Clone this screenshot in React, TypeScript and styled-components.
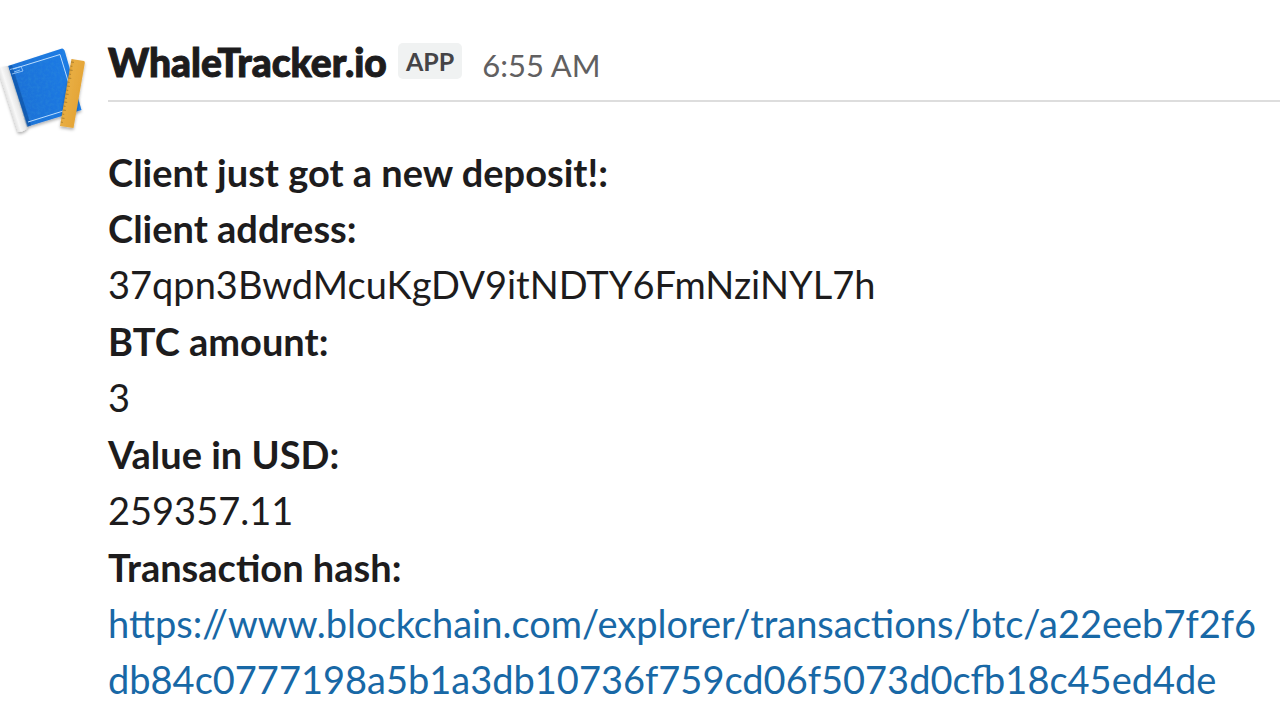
import React from "react";
import styled, { createGlobalStyle } from "styled-components";

const GlobalStyle = createGlobalStyle`
  * { box-sizing: border-box; }
  body {
    margin: 0;
    background: #ffffff;
    color: #1d1c1d;
    font-family: Lato, "Liberation Sans", sans-serif;
    overflow-x: hidden;
    -webkit-font-smoothing: antialiased;
  }
`;

const Message = styled.article`
  display: flex;
  align-items: flex-start;
  padding-top: 35px;
`;

const AvatarColumn = styled.div`
  flex: 0 0 108px;

  svg {
    display: block;
  }
`;

const Content = styled.div`
  flex: 1;
  min-width: 0;
`;

const Header = styled.header`
  display: flex;
  align-items: baseline;
  height: 67px;
  padding-top: 3px;
  border-bottom: 2px solid #dddddd;
`;

const Sender = styled.h1`
  margin: 0;
  font-size: 39px;
  font-weight: 900;
  line-height: 48px;
  -webkit-text-stroke: 1px currentColor;
`;

const Badge = styled.span`
  align-self: flex-start;
  margin: 5px 0 0 11px;
  padding: 0 8px;
  border-radius: 5px;
  background: #f0f2f2;
  color: #454447;
  font-size: 25px;
  font-weight: 700;
  line-height: 36px;
`;

const Time = styled.time`
  margin-left: 20px;
  color: #616061;
  font-size: 31px;
  line-height: 48px;
`;

const Body = styled.div`
  padding: 42px 8px 0 0;
  font-size: 38px;
  line-height: 56px;
`;

const Title = styled.h2`
  margin: 0;
  font-size: inherit;
  font-weight: 700;
`;

const Details = styled.dl`
  display: flex;
  flex-direction: column;
  gap: 1px;
  margin: 0;
`;

const Label = styled.dt`
  font-weight: 700;
`;

const Value = styled.dd`
  margin: 0;
  word-break: break-all;
`;

const Link = styled.a`
  color: #1868a6;
  text-decoration: none;

  &:hover {
    text-decoration: underline;
  }
`;

const ticks = Array.from({ length: 16 }, (_, i) => i);

function BlueprintIcon() {
  return (
    <svg width="90" height="104" viewBox="0 0 90 104" role="img" aria-label="WhaleTracker.io">
      <defs>
        <linearGradient id="roll" x1="8" y1="66" x2="19" y2="62.5" gradientUnits="userSpaceOnUse">
          <stop offset="0" stopColor="#e4e4e4" />
          <stop offset="0.3" stopColor="#f8f8f8" />
          <stop offset="0.75" stopColor="#e6e6e6" />
          <stop offset="1" stopColor="#bdbdbd" />
        </linearGradient>
        <linearGradient id="paper" x1="15" y1="60" x2="75" y2="40" gradientUnits="userSpaceOnUse">
          <stop offset="0" stopColor="#155fb8" />
          <stop offset="0.12" stopColor="#1b72d8" />
          <stop offset="1" stopColor="#1b7be6" />
        </linearGradient>
        <linearGradient id="wood" x1="65" y1="50" x2="80" y2="53" gradientUnits="userSpaceOnUse">
          <stop offset="0" stopColor="#d9982c" />
          <stop offset="0.3" stopColor="#e8ad42" />
          <stop offset="1" stopColor="#e5a638" />
        </linearGradient>
        <filter id="grain" x="0" y="0" width="1" height="1">
          <feTurbulence type="fractalNoise" baseFrequency="0.35" numOctaves="2" seed="4" />
          <feColorMatrix values="0 0 0 0 0.03  0 0 0 0 0.28  0 0 0 0 0.68  0 0 0 1.6 -0.6" />
          <feComposite in2="SourceGraphic" operator="in" />
        </filter>
        <filter id="shadow" x="-0.2" y="-0.2" width="1.4" height="1.4">
          <feDropShadow dx="0" dy="2" stdDeviation="1.5" floodColor="#000000" floodOpacity="0.3" />
        </filter>
      </defs>
      <g filter="url(#shadow)">
        <path d="M8 31 L62 13.5 Q64 13.5 65 17 L81.500 75 L26 92 Z" fill="url(#paper)" />
        <path d="M-2 34 Q2 31 8 31 L28 92 Q25 97 18 97 Z" fill="url(#roll)" />
      </g>
      <path d="M8 31 L62 13.5 Q64 13.5 65 17 L81.500 75 L26 92 Z" fill="#1b7be6" opacity="0.45" filter="url(#grain)" />
      <path d="M9 31 L12 30 L31 90.500 L27 92 Z" fill="#0b4c9c" opacity="0.5" />
      <path d="M13 34 L60 19.500 L76 72 L28 87" fill="none" stroke="#b9dcff" strokeWidth="1" />
      <path d="M10 34.500 L21 31.500 L23 36 L12 39 M14 37 L20 35" fill="none" stroke="#a5d0fb" strokeWidth="0.8" />
      <path d="M71.500 24 L84 26 Q85 26.500 84.800 28 L73.500 93 L60 91 Z" fill="url(#wood)" filter="url(#shadow)" />
      {ticks.map((i) => (
        <path
          key={i}
          d={`M${71 - i * 0.68} ${27 + i * 4} l${i % 2 ? 2 : 3} 0.4`}
          stroke="#96702a"
          strokeWidth="0.7"
        />
      ))}
    </svg>
  );
}

const TRANSACTION_URL =
  "https://www.blockchain.com/explorer/transactions/btc/a22eeb7f2f6db84c0777198a5b1a3db10736f759cd06f5073d0cfb18c45ed4de";

export default function App() {
  return (
    <>
      <GlobalStyle />
      <Message>
        <AvatarColumn>
          <BlueprintIcon />
        </AvatarColumn>
        <Content>
          <Header>
            <Sender>WhaleTracker.io</Sender>
            <Badge>APP</Badge>
            <Time dateTime="06:55">6:55 AM</Time>
          </Header>
          <Body>
            <Title>Client just got a new deposit!:</Title>
            <Details>
              <div>
                <Label>Client address:</Label>
                <Value>37qpn3BwdMcuKgDV9itNDTY6FmNziNYL7h</Value>
              </div>
              <div>
                <Label>BTC amount:</Label>
                <Value>3</Value>
              </div>
              <div>
                <Label>Value in USD:</Label>
                <Value>259357.11</Value>
              </div>
              <div>
                <Label>Transaction hash:</Label>
                <Value>
                  <Link href={TRANSACTION_URL}>{TRANSACTION_URL}</Link>
                </Value>
              </div>
            </Details>
          </Body>
        </Content>
      </Message>
    </>
  );
}
